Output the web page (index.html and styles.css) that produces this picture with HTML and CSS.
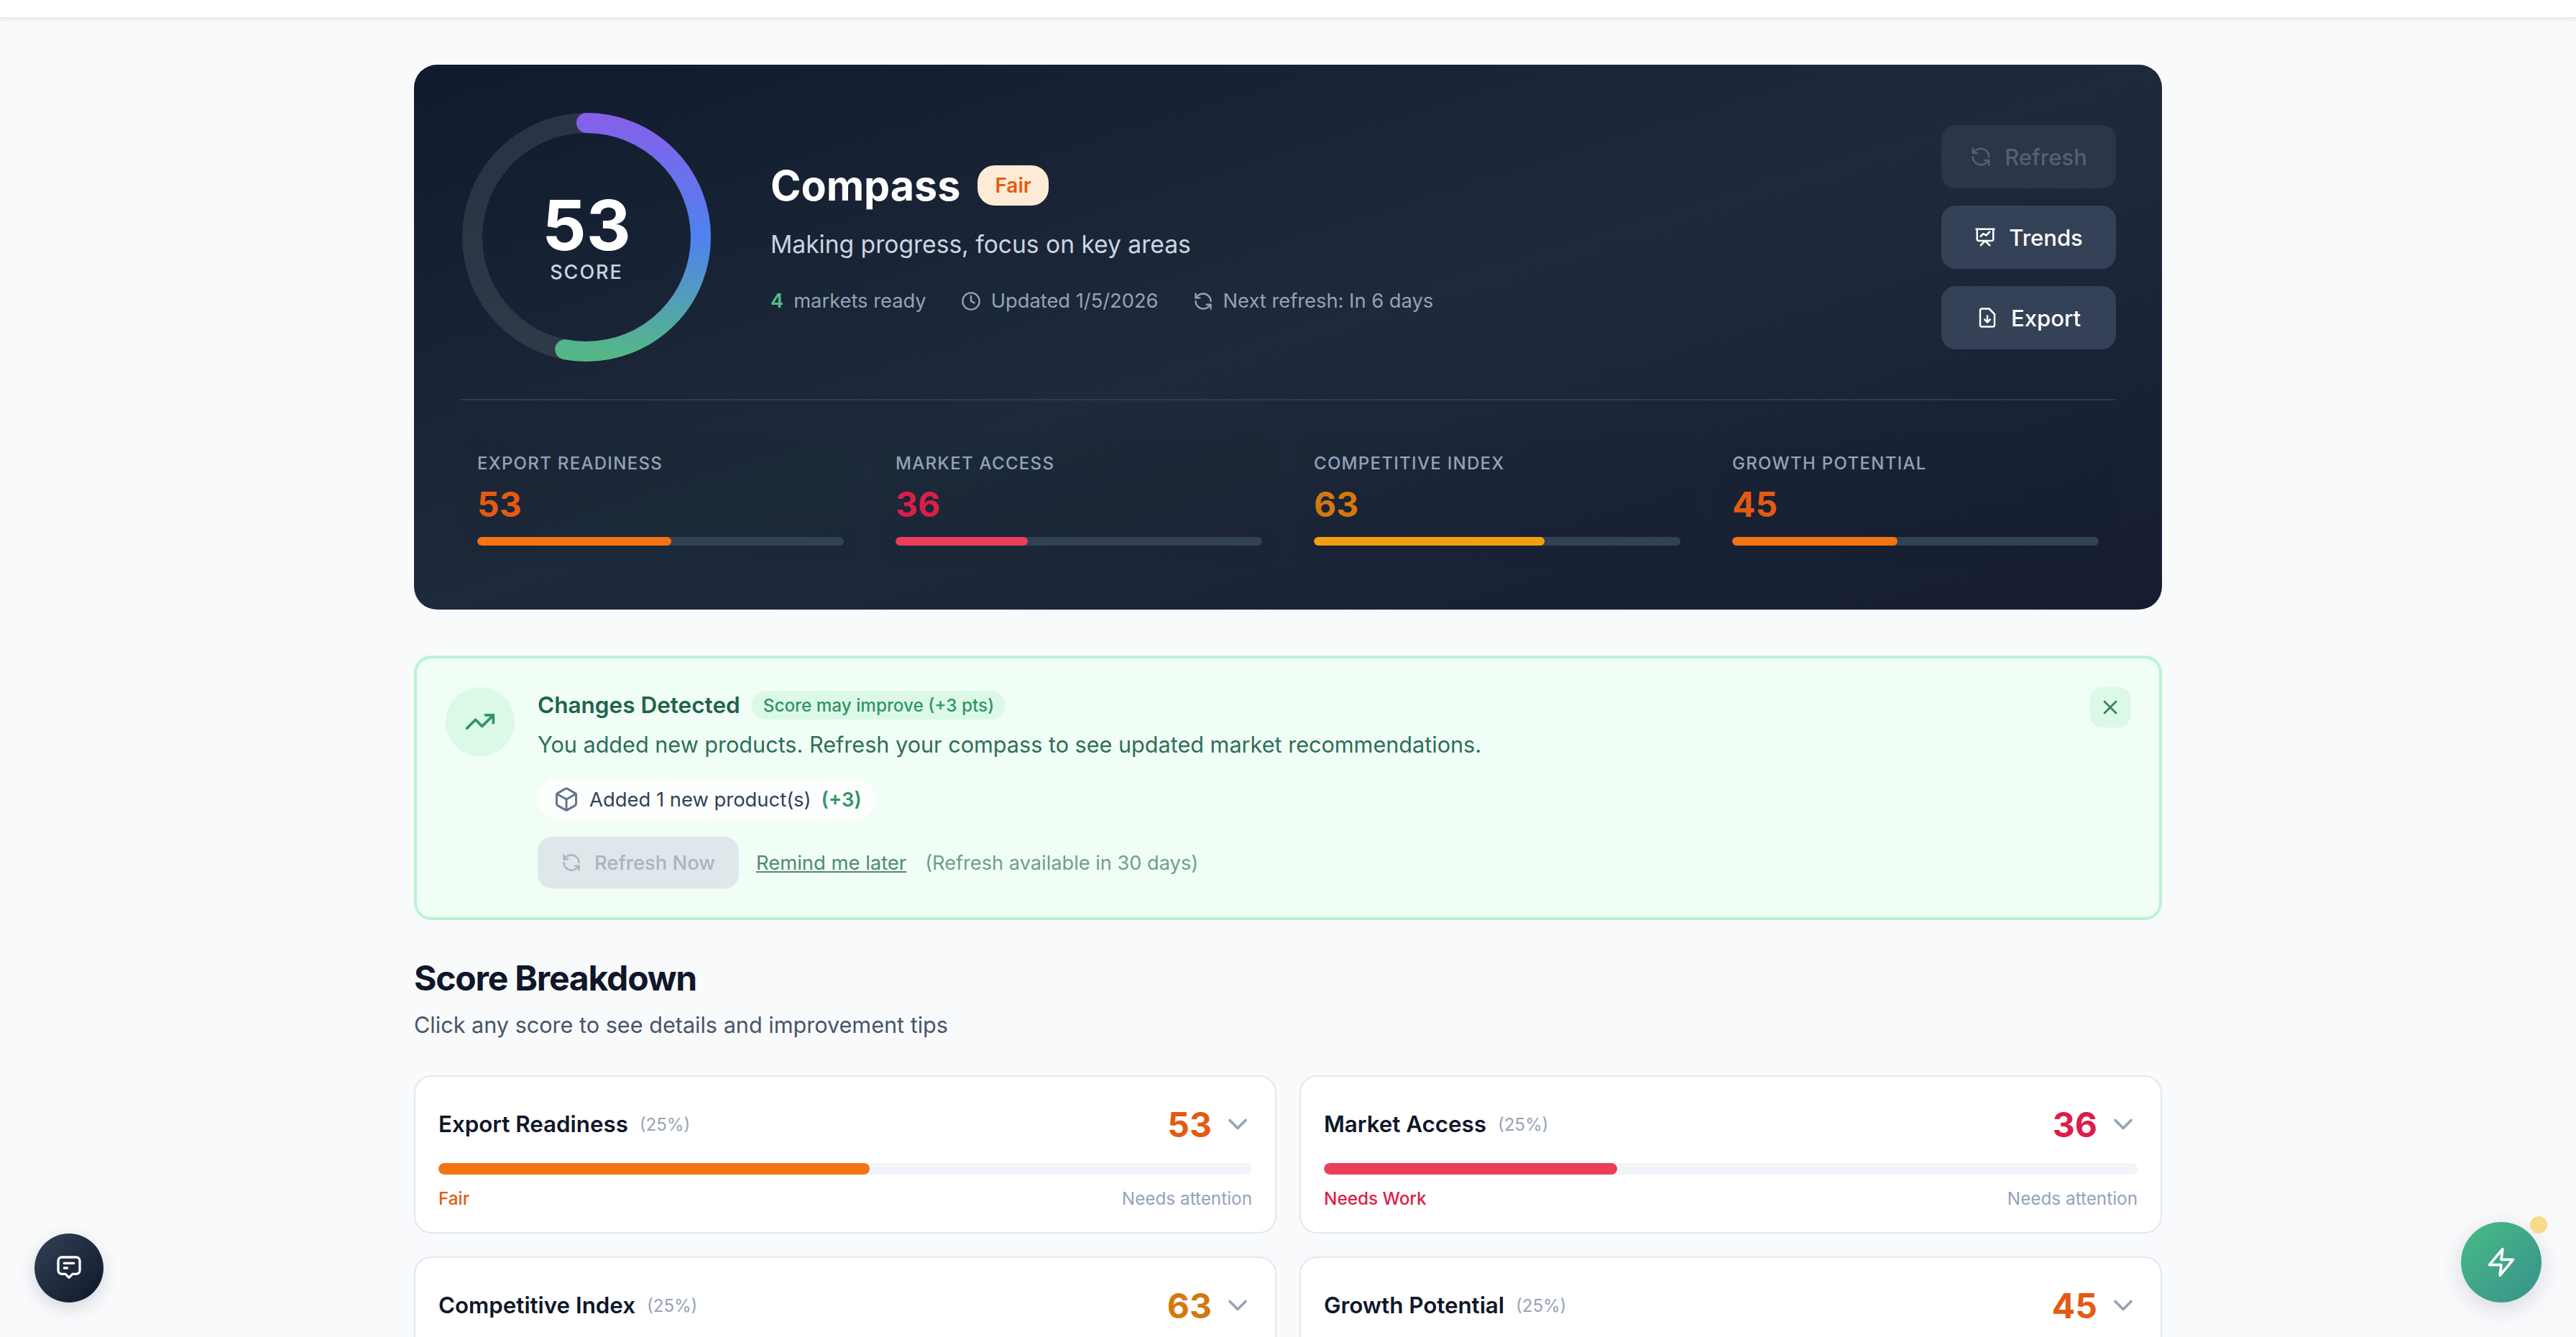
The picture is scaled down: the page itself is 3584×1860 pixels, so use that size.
FILE: index.html
```html
<!DOCTYPE html>
<html lang="en">

<head>
    <meta charset="utf-8" />
    <title>Compass</title>
    <link rel="stylesheet" href="styles.css">
</head>

<body>
    <div class="topbar"></div>
    <main class="page">
        <section class="hero">
            <div class="hero-top">
                <div class="ring">
                    <svg viewBox="0 0 352 352" width="352" height="352">
                        <defs>
                            <linearGradient id="ringGrad" gradientUnits="userSpaceOnUse" x1="342" y1="0" x2="10" y2="0">
                                <stop offset="0" stop-color="#8560ea" />
                                <stop offset="0.5" stop-color="#4f82f0" />
                                <stop offset="1" stop-color="#54b884" />
                            </linearGradient>
                        </defs>
                        <circle class="ring-track" cx="176" cy="176" r="159" />
                        <circle class="ring-value" cx="176" cy="176" r="159" pathLength="100"
                            stroke-dasharray="53 100" transform="rotate(-90 176 176)" />
                    </svg>
                    <div class="ring-text">
                        <div class="ring-number">53</div>
                        <div class="ring-label">SCORE</div>
                    </div>
                </div>
                <div class="hero-info">
                    <div class="hero-title">
                        <h1>Compass</h1>
                        <span class="badge">Fair</span>
                    </div>
                    <p class="hero-sub">Making progress, focus on key areas</p>
                    <div class="hero-meta">
                        <span><b>4</b> markets ready</span>
                        <span>
                            <svg class="icon" viewBox="0 0 24 24"><circle cx="12" cy="12" r="10" /><path d="M12 6v6l4 2" /></svg>
                            Updated 1/5/2026
                        </span>
                        <span>
                            <svg class="icon" viewBox="0 0 24 24"><path d="M21 12a9 9 0 0 0-9-9 9.75 9.75 0 0 0-6.74 2.74L3 8" /><path d="M3 3v5h5" /><path d="M3 12a9 9 0 0 0 9 9 9.75 9.75 0 0 0 6.74-2.74L21 16" /><path d="M16 16h5v5" /></svg>
                            Next refresh: In 6 days
                        </span>
                    </div>
                </div>
                <div class="hero-actions">
                    <button type="button" class="hero-btn disabled">
                        <svg class="icon" viewBox="0 0 24 24"><path d="M21 12a9 9 0 0 0-9-9 9.75 9.75 0 0 0-6.74 2.74L3 8" /><path d="M3 3v5h5" /><path d="M3 12a9 9 0 0 0 9 9 9.75 9.75 0 0 0 6.74-2.74L21 16" /><path d="M16 16h5v5" /></svg>
                        Refresh
                    </button>
                    <button type="button" class="hero-btn">
                        <svg class="icon" viewBox="0 0 24 24"><path d="M2 3h20" /><path d="M21 3v11a2 2 0 0 1-2 2H5a2 2 0 0 1-2-2V3" /><path d="m7 21 5-5 5 5" /><path d="m7 11 3-3 3 2 4-4" /></svg>
                        Trends
                    </button>
                    <button type="button" class="hero-btn">
                        <svg class="icon" viewBox="0 0 24 24"><path d="M14 2H6a2 2 0 0 0-2 2v16a2 2 0 0 0 2 2h12a2 2 0 0 0 2-2V8z" /><path d="M12 10v7" /><path d="m9 14 3 3 3-3" /></svg>
                        Export
                    </button>
                </div>
            </div>
            <div class="stats">
                <div class="stat">
                    <div class="stat-label">EXPORT READINESS</div>
                    <div class="stat-value orange">53</div>
                    <div class="stat-bar"><div class="stat-fill fill-orange" style="width: 53%"></div></div>
                </div>
                <div class="stat">
                    <div class="stat-label">MARKET ACCESS</div>
                    <div class="stat-value red">36</div>
                    <div class="stat-bar"><div class="stat-fill fill-red" style="width: 36%"></div></div>
                </div>
                <div class="stat">
                    <div class="stat-label">COMPETITIVE INDEX</div>
                    <div class="stat-value amber">63</div>
                    <div class="stat-bar"><div class="stat-fill fill-amber" style="width: 63%"></div></div>
                </div>
                <div class="stat">
                    <div class="stat-label">GROWTH POTENTIAL</div>
                    <div class="stat-value orange">45</div>
                    <div class="stat-bar"><div class="stat-fill fill-orange" style="width: 45%"></div></div>
                </div>
            </div>
        </section>

        <section class="notice">
            <div class="notice-icon">
                <svg class="icon" viewBox="0 0 24 24"><path d="M22 7 13.5 15.5 8.5 10.5 2 17" /><path d="M16 7h6v6" /></svg>
            </div>
            <div class="notice-body">
                <div class="notice-head">
                    <h3>Changes Detected</h3>
                    <span class="chip">Score may improve (+3 pts)</span>
                </div>
                <p class="notice-text">You added new products. Refresh your compass to see updated market recommendations.</p>
                <div class="pill">
                    <svg class="icon" viewBox="0 0 24 24"><path d="M21 8a2 2 0 0 0-1-1.73l-7-4a2 2 0 0 0-2 0l-7 4A2 2 0 0 0 3 8v8a2 2 0 0 0 1 1.73l7 4a2 2 0 0 0 2 0l7-4A2 2 0 0 0 21 16Z" /><path d="m3.3 7 8.7 5 8.7-5" /><path d="M12 22V12" /></svg>
                    <span>Added 1 new product(s)</span>
                    <b>(+3)</b>
                </div>
                <div class="notice-actions">
                    <button type="button" class="refresh-now">
                        <svg class="icon" viewBox="0 0 24 24"><path d="M21 12a9 9 0 0 0-9-9 9.75 9.75 0 0 0-6.74 2.74L3 8" /><path d="M3 3v5h5" /><path d="M3 12a9 9 0 0 0 9 9 9.75 9.75 0 0 0 6.74-2.74L21 16" /><path d="M16 16h5v5" /></svg>
                        Refresh Now
                    </button>
                    <a class="remind" href="#">Remind me later</a>
                    <span class="available">(Refresh available in 30 days)</span>
                </div>
            </div>
            <button type="button" class="notice-close">
                <svg class="icon" viewBox="0 0 24 24"><path d="M18 6 6 18" /><path d="m6 6 12 12" /></svg>
            </button>
        </section>

        <section class="breakdown">
            <h2>Score Breakdown</h2>
            <p class="breakdown-sub">Click any score to see details and improvement tips</p>
            <div class="cards">
                <div class="card">
                    <div class="card-head">
                        <span class="card-title">Export Readiness</span>
                        <span class="card-weight">(25%)</span>
                        <span class="card-score orange">53</span>
                        <svg class="icon chevron" viewBox="0 0 24 24"><path d="m6 9 6 6 6-6" /></svg>
                    </div>
                    <div class="card-bar"><div class="card-fill fill-orange" style="width: 53%"></div></div>
                    <div class="card-foot">
                        <span class="orange">Fair</span>
                        <span class="muted">Needs attention</span>
                    </div>
                </div>
                <div class="card">
                    <div class="card-head">
                        <span class="card-title">Market Access</span>
                        <span class="card-weight">(25%)</span>
                        <span class="card-score red">36</span>
                        <svg class="icon chevron" viewBox="0 0 24 24"><path d="m6 9 6 6 6-6" /></svg>
                    </div>
                    <div class="card-bar"><div class="card-fill fill-red" style="width: 36%"></div></div>
                    <div class="card-foot">
                        <span class="red">Needs Work</span>
                        <span class="muted">Needs attention</span>
                    </div>
                </div>
                <div class="card">
                    <div class="card-head">
                        <span class="card-title">Competitive Index</span>
                        <span class="card-weight">(25%)</span>
                        <span class="card-score amber">63</span>
                        <svg class="icon chevron" viewBox="0 0 24 24"><path d="m6 9 6 6 6-6" /></svg>
                    </div>
                </div>
                <div class="card">
                    <div class="card-head">
                        <span class="card-title">Growth Potential</span>
                        <span class="card-weight">(25%)</span>
                        <span class="card-score orange">45</span>
                        <svg class="icon chevron" viewBox="0 0 24 24"><path d="m6 9 6 6 6-6" /></svg>
                    </div>
                </div>
            </div>
        </section>
    </main>

    <button type="button" class="float-chat">
        <svg class="icon" viewBox="0 0 24 24"><path d="M6 3h12a3 3 0 0 1 3 3v8a3 3 0 0 1-3 3h-3l-3 3-3-3H6a3 3 0 0 1-3-3V6a3 3 0 0 1 3-3z" /><path d="M8 8h8" /><path d="M8 12h2.5" /></svg>
    </button>
    <button type="button" class="float-zap">
        <svg class="icon" viewBox="0 0 24 24"><polygon points="13 2 3 14 12 14 11 22 21 10 12 10 13 2" /></svg>
        <span class="float-dot"></span>
    </button>
</body>

</html>
```

FILE: styles.css
```css
html,
body {
    height: 1860px;
    overflow: hidden;
}

body {
    margin: 0;
    background: #f9fafc;
    font-family: Inter, "Noto Sans", sans-serif;
    color: #0f172a;
}

button {
    font-family: inherit;
    border: none;
    margin: 0;
}

h1,
h2,
h3,
p {
    margin: 0;
}

.icon {
    fill: none;
    stroke: currentColor;
    stroke-width: 2;
    stroke-linecap: round;
    stroke-linejoin: round;
    flex: none;
}

.orange {
    color: #e45a12;
}

.red {
    color: #dc1d4a;
}

.amber {
    color: #d4780e;
}

.muted {
    color: #94a3b8;
}

.fill-orange {
    background: #f47315;
}

.fill-red {
    background: #ec3d5b;
}

.fill-amber {
    background: #f09e12;
}

.topbar {
    height: 24px;
    background: #fff;
    box-shadow: 0 2px 0 #eaeaed, 0 4px 6px rgba(15, 23, 42, 0.05);
}

.page {
    width: 2432px;
    margin: 0 auto;
    padding-top: 66px;
}

/* hero */
.hero {
    box-sizing: border-box;
    height: 758px;
    padding: 64px;
    border-radius: 32px;
    background: linear-gradient(to bottom right, #111a2e 0%, #1e2a3b 50%, #161d30 100%);
}

.hero-top {
    display: flex;
    align-items: flex-start;
    height: 401px;
    border-bottom: 2px solid #2f3a4c;
}

.ring {
    position: relative;
    width: 352px;
    height: 352px;
}

.ring-track,
.ring-value {
    fill: none;
    stroke-width: 28;
}

.ring-track {
    stroke: rgba(255, 255, 255, 0.1);
}

.ring-value {
    stroke: url(#ringGrad);
    stroke-linecap: round;
}

.ring-text {
    position: absolute;
    inset: 0;
    display: flex;
    flex-direction: column;
    align-items: center;
    justify-content: center;
}

.ring-number {
    margin-top: 3px;
    font-size: 96px;
    font-weight: 700;
    line-height: 90px;
    color: #fff;
}

.ring-label {
    margin-top: 5px;
    font-size: 27px;
    font-weight: 500;
    line-height: 32px;
    letter-spacing: 2px;
    color: #cbd5e1;
}

.hero-info {
    flex: 1;
    margin-left: 80px;
    padding-top: 70px;
}

.hero-title {
    display: flex;
    align-items: center;
    gap: 24px;
}

h1 {
    font-size: 57.4px;
    font-weight: 700;
    line-height: 68px;
    color: #fff;
}

.badge {
    padding: 0 24px;
    font-size: 28px;
    font-weight: 600;
    line-height: 56px;
    border-radius: 24px;
    background: #fdebd5;
    color: #e8590c;
}

.hero-sub {
    margin-top: 26px;
    font-size: 33.6px;
    line-height: 44px;
    color: #cbd5e1;
}

.hero-meta {
    display: flex;
    gap: 48px;
    margin-top: 39px;
    font-size: 27.3px;
    line-height: 36px;
    color: #94a3b8;
}

.hero-meta span {
    display: flex;
    align-items: center;
    gap: 14px;
}

.hero-meta b {
    font-weight: 600;
    color: #4fc08a;
}

.hero-meta .icon {
    width: 28px;
    height: 28px;
}

.hero-actions {
    display: flex;
    flex-direction: column;
    gap: 24px;
    margin-top: 20px;
}

.hero-btn {
    display: flex;
    align-items: center;
    justify-content: center;
    gap: 18px;
    width: 243px;
    height: 88px;
    border-radius: 20px;
    background: #354156;
    color: #fff;
    font-size: 31px;
    font-weight: 500;
}

.hero-btn .icon {
    width: 30px;
    height: 30px;
}

.hero-btn.disabled {
    background: #2b3648;
    color: #526075;
}

.stats {
    display: grid;
    grid-template-columns: repeat(4, 1fr);
    gap: 24px;
    margin-top: 48px;
}

.stat {
    height: 180px;
    box-sizing: border-box;
    padding: 24px;
    border-radius: 24px;
    background: rgba(15, 23, 42, 0.07);
}

.stat-label {
    font-size: 24px;
    font-weight: 500;
    line-height: 32px;
    letter-spacing: 1.3px;
    color: #94a3b8;
}

.stat-value {
    margin-top: 12px;
    font-size: 48px;
    font-weight: 700;
    line-height: 58px;
}

.stat-bar {
    height: 12px;
    margin-top: 16px;
    border-radius: 6px;
    background: #334155;
    overflow: hidden;
}

.stat-fill {
    height: 100%;
    border-radius: 6px;
}

/* changes notice */
.notice {
    position: relative;
    display: flex;
    box-sizing: border-box;
    height: 368px;
    margin-top: 64px;
    padding: 40px;
    border: 4px solid #b9f3d2;
    border-radius: 24px;
    background: #f0fef6;
}

.notice-icon {
    display: flex;
    align-items: center;
    justify-content: center;
    flex: none;
    width: 96px;
    height: 96px;
    border-radius: 50%;
    background: #dcf8e7;
    color: #2f9664;
}

.notice-icon .icon {
    width: 44px;
    height: 44px;
}

.notice-body {
    flex: 1;
    margin-left: 32px;
}

.notice-head {
    display: flex;
    align-items: center;
    gap: 16px;
    height: 44px;
    margin-top: 3px;
}

h3 {
    font-size: 31.5px;
    font-weight: 600;
    line-height: 44px;
    color: #1f6348;
}

.chip {
    padding: 0 16px;
    font-size: 24.3px;
    font-weight: 500;
    line-height: 40px;
    border-radius: 20px;
    background: #dcf8e7;
    color: #2f9664;
}

.notice-text {
    margin-top: 11px;
    font-size: 30.6px;
    line-height: 44px;
    color: #2f6f55;
}

.pill {
    display: inline-flex;
    align-items: center;
    gap: 14px;
    height: 56px;
    margin-top: 26px;
    padding: 0 20px 0 22px;
    border-radius: 28px;
    background: rgba(255, 255, 255, 0.8);
    font-size: 27.4px;
    color: #334155;
}

.pill .icon {
    width: 36px;
    height: 36px;
    color: #64748b;
}

.pill b {
    font-weight: 600;
    color: #2f9664;
}

.notice-actions {
    display: flex;
    align-items: center;
    margin-top: 24px;
}

.refresh-now {
    display: flex;
    align-items: center;
    justify-content: center;
    gap: 18px;
    width: 280px;
    height: 72px;
    border-radius: 20px;
    background: #dee7ea;
    color: #a8b5c0;
    font-size: 27.4px;
    font-weight: 500;
}

.refresh-now .icon {
    width: 28px;
    height: 28px;
}

.remind {
    margin-left: 24px;
    font-size: 27.4px;
    color: #4f8a70;
}

.available {
    margin-left: 26px;
    font-size: 27.2px;
    color: #6f9e88;
}

.notice-close {
    position: absolute;
    top: 40px;
    right: 40px;
    display: flex;
    align-items: center;
    justify-content: center;
    width: 56px;
    height: 56px;
    padding: 0;
    border-radius: 16px;
    background: #dcf8e7;
    color: #2f855a;
}

.notice-close .icon {
    width: 32px;
    height: 32px;
}

/* breakdown */
.breakdown {
    margin-top: 51px;
}

h2 {
    font-size: 48px;
    font-weight: 700;
    line-height: 60px;
    letter-spacing: -1.2px;
    color: #0f172a;
}

.breakdown-sub {
    margin-top: 13px;
    font-size: 30.6px;
    line-height: 44px;
    color: #475569;
}

.cards {
    display: grid;
    grid-template-columns: repeat(2, 1fr);
    gap: 32px;
    margin-top: 48px;
}

.card {
    box-sizing: border-box;
    height: 220px;
    padding: 32px;
    border: 2px solid #e2e8f0;
    border-radius: 24px;
    background: #fff;
}

.card-head {
    display: flex;
    align-items: center;
    height: 68px;
}

.card-title {
    font-size: 31.3px;
    font-weight: 600;
    color: #0f172a;
}

.card-weight {
    margin-left: 16px;
    font-size: 24px;
    color: #94a3b8;
}

.card-score {
    margin-left: auto;
    font-size: 48px;
    font-weight: 700;
}

.chevron {
    width: 44px;
    height: 44px;
    margin-left: 14px;
    margin-right: -2px;
    color: #94a3b8;
}

.card-bar {
    height: 16px;
    margin-top: 20px;
    border-radius: 8px;
    background: #f1f5f9;
    overflow: hidden;
}

.card-fill {
    height: 100%;
    border-radius: 8px;
}

.card-foot {
    display: flex;
    justify-content: space-between;
    margin-top: 17px;
    font-size: 24.3px;
    line-height: 32px;
}

.card-foot span:first-child {
    font-weight: 500;
}

/* floating buttons */
.float-chat,
.float-zap {
    position: fixed;
    display: flex;
    align-items: center;
    justify-content: center;
    padding: 0;
    border-radius: 50%;
    color: #fff;
}

.float-chat {
    left: 48px;
    bottom: 48px;
    width: 96px;
    height: 96px;
    background: linear-gradient(135deg, #334155, #0f172a);
    box-shadow: 0 8px 24px rgba(15, 23, 42, 0.15);
}

.float-chat .icon {
    width: 40px;
    height: 40px;
}

.float-zap {
    right: 48px;
    bottom: 48px;
    width: 112px;
    height: 112px;
    background: linear-gradient(135deg, #48bb84, #38918c);
    box-shadow: 0 8px 32px rgba(15, 23, 42, 0.15);
}

.float-zap .icon {
    width: 44px;
    height: 44px;
}

.float-dot {
    position: absolute;
    top: -8px;
    right: -8px;
    width: 24px;
    height: 24px;
    border-radius: 50%;
    background: #f9d98c;
}
```
